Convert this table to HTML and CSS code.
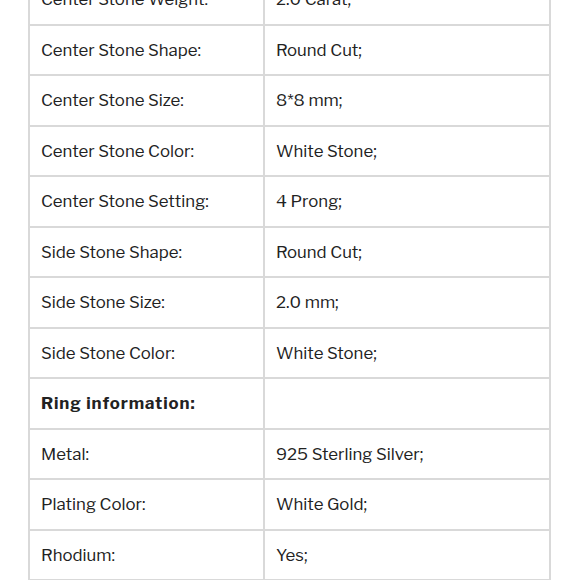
FILE: index.html
```html
<!DOCTYPE html>
<html>
<head>
<meta charset="utf-8">
<link rel="stylesheet" href="styles.css">
</head>
<body>
<div class="wrap">
<table class="spec">
<tbody>
<tr><td>Center Stone Weight:</td><td>2.0 Carat;</td></tr>
<tr><td>Center Stone Shape:</td><td>Round Cut;</td></tr>
<tr><td>Center Stone Size:</td><td>8*8 mm;</td></tr>
<tr><td>Center Stone Color:</td><td>White Stone;</td></tr>
<tr><td>Center Stone Setting:</td><td>4 Prong;</td></tr>
<tr><td>Side Stone Shape:</td><td>Round Cut;</td></tr>
<tr><td>Side Stone Size:</td><td>2.0 mm;</td></tr>
<tr><td>Side Stone Color:</td><td>White Stone;</td></tr>
<tr><td class="head">Ring information:</td><td></td></tr>
<tr><td>Metal:</td><td>925 Sterling Silver;</td></tr>
<tr><td>Plating Color:</td><td>White Gold;</td></tr>
<tr><td>Rhodium:</td><td>Yes;</td></tr>
</tbody>
</table>
</div>
</body>
</html>
```
FILE: styles.css
```css
html, body {
  margin: 0;
  padding: 0;
  background: #ffffff;
}
body {
  font-family: "Libre Franklin", "Liberation Sans", Arial, sans-serif;
  color: #222222;
  overflow: hidden;
}
.wrap {
  padding: 0 29px 0 28px;
  margin-top: -27px;
}
.spec {
  width: 100%;
  border-collapse: collapse;
  table-layout: fixed;
}
.spec td {
  border: 2px solid #d9d9d9;
  height: 50.5px;
  padding: 0 11px;
  font-size: 16.8px;
  line-height: 20px;
  vertical-align: middle;
  box-sizing: border-box;
}
.spec td:first-child {
  width: 235px;
}
.spec td.head {
  font-weight: 700;
  letter-spacing: 0.9px;
}
```
